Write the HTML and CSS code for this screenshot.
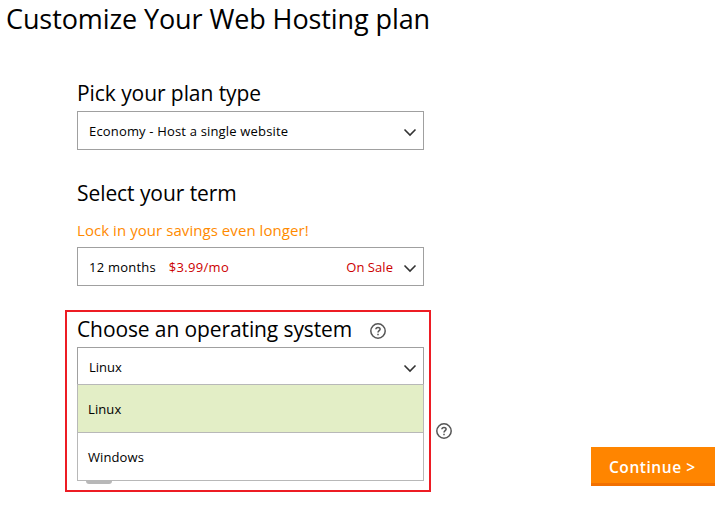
FILE: index.html
```html
<!DOCTYPE html>
<html lang="en">
<head>
<meta charset="utf-8">
<title>Customize Your Web Hosting plan</title>
<link rel="stylesheet" href="styles.css">
</head>
<body>
<h1 class="title"><span>Customize Your Web Hosting plan</span></h1>
<section class="field field-plan">
  <h2 class="label"><span>Pick your plan type</span></h2>
  <div class="select"><span class="economy">Economy - Host a single website</span>
    <svg class="chevron" viewBox="0 0 14 9"><path d="M1.500 1.500 7 7l5.500-5.500"/></svg></div>
</section>
<section class="field field-term">
  <h2 class="label"><span>Select your term</span></h2>
  <p class="hint"><span>Lock in your savings even longer!</span></p>
  <div class="select"><span class="months">12 months</span><span class="price">$3.99/mo</span><span class="sale">On Sale</span>
    <svg class="chevron" viewBox="0 0 14 9"><path d="M1.500 1.500 7 7l5.500-5.500"/></svg></div>
</section>
<div class="bottom">
  <section class="highlight">
    <h2 class="label"><span>Choose an operating system</span>
      <svg class="help" viewBox="0 0 16 16"><circle cx="8" cy="8" r="7.200"/><path d="M5.900 6.300C6 3.900 10.100 3.900 10.100 6.200 10.100 7.600 8 7.700 8 9.500M8 10.800v1.500"/></svg></h2>
    <div class="select select-open"><span>Linux</span>
      <svg class="chevron" viewBox="0 0 14 9"><path d="M1.500 1.500 7 7l5.500-5.500"/></svg></div>
    <ul class="menu">
      <li class="option selected"><span>Linux</span></li>
      <li class="option"><span>Windows</span></li>
    </ul>
    <div class="toggle"></div>
  </section>
  <svg class="help help-side" viewBox="0 0 16 16"><circle cx="8" cy="8" r="7.200"/><path d="M5.900 6.300C6 3.900 10.100 3.900 10.100 6.200 10.100 7.600 8 7.700 8 9.500M8 10.800v1.500"/></svg>
  <button class="continue"><span>Continue &gt;</span></button>
</div>
</body>
</html>
```
FILE: styles.css
```css
* { box-sizing: border-box; }
body { margin: 0; width: 726px; height: 517px; overflow: hidden; background: #fff; color: #000; font-family: "Open Sans", "Noto Sans", sans-serif; font-size: 13px; }
h1, h2, p, ul { margin: 0; padding: 0; font-weight: 400; list-style: none; }
span { white-space: nowrap; }
.title { height: 78px; padding-left: 6px; font-size: 27px; line-height: 38px; letter-spacing: -0.1px; }
.field { width: 347px; margin-left: 77px; }
.field-plan { height: 99px; }
.field-term { height: 132px; }
.label { display: flex; align-items: center; height: 33px; padding-bottom: 3px; font-size: 21px; line-height: 30px; letter-spacing: -0.07px; }
.field-term .label { margin-top: 1px; }
.select { display: flex; align-items: center; height: 39px; padding: 0 6px 0 11px; border: 1px solid #a0a0a0; background: #fff; line-height: 20px; }
.economy { letter-spacing: 0.17px; }
.months { letter-spacing: 0.22px; }
.chevron { width: 14px; height: 9px; margin-left: auto; margin-top: 3px; fill: none; stroke: #333; stroke-width: 1.6; }
.hint { height: 36px; color: #ff8a00; font-size: 15px; line-height: 39px; letter-spacing: 0.06px; }
.price { margin-left: 13px; color: #cc0000; letter-spacing: 0.3px; }
.sale { margin-left: auto; color: #cc0000; letter-spacing: 0.05px; }
.sale + .chevron { margin-left: 10px; }
.bottom { display: flex; align-items: flex-start; }
.highlight { width: 366px; height: 182px; margin-left: 65px; padding: 1px 5px 0 10px; border: 2px solid #ed1c24; }
.highlight .label { height: 34px; letter-spacing: -0.11px; }
.help { width: 16px; height: 16px; fill: none; stroke: #555; stroke-width: 1.5; }
.label .help { margin-left: 18px; margin-top: 4px; }
.select-open { height: 38px; border-bottom: 0; }
.menu { margin-top: -1px; border: 1px solid #b8b8b8; background: #fff; }
.option { height: 47px; padding-left: 10px; line-height: 48px; letter-spacing: 0.1px; }
.selected { height: 48px; border-bottom: 1px solid #b8b8b8; background: #e3eec6; }
.toggle { width: 26px; height: 3px; margin-left: 9px; border-radius: 0 0 8px 8px; background: #b8b8b8; }
.help-side { margin: 113px 0 0 5px; }
.continue { width: 124px; height: 39px; margin: 137px 0 0 139px; padding: 4px 0 0 18px; border: 0; border-bottom: 3px solid #f27000; background: #ff8500; color: #fff; font: 600 15.500px/32px "Open Sans", sans-serif; letter-spacing: 0.55px; text-align: left; }
```
